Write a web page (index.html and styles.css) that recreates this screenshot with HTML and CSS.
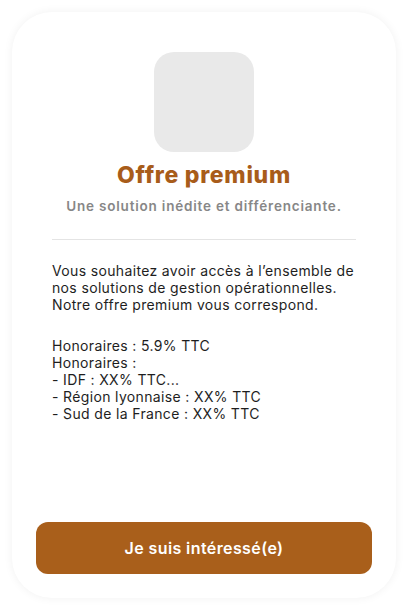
FILE: index.html
```html
<!DOCTYPE html>
<html lang="fr">
<head>
  <meta charset="UTF-8">
  <title>Offre premium</title>
  <link rel="stylesheet" href="styles.css">
</head>
<body>

  <div class="carte">
    <div class="contenu">
      <div class="vignette"></div>
      <h1 class="titre">Offre premium</h1>
      <p class="sous-titre">Une solution inédite et différenciante.</p>
      <hr class="separateur">
      <p class="texte">Vous souhaitez avoir accès à l’ensemble de<br>
        nos solutions de gestion opérationnelles.<br>
        Notre offre premium vous correspond.</p>
      <p class="texte">Honoraires : 5.9% TTC<br>
        Honoraires :<br>
        - IDF : XX% TTC...<br>
        - Région lyonnaise : XX% TTC<br>
        - Sud de la France : XX% TTC</p>
    </div>
    <button class="bouton">Je suis intéressé(e)</button>
  </div>

</body>
</html>
```

FILE: styles.css
```css
body {
  margin: 0;
  background: #fff;
  font-family: Inter, "Noto Sans", sans-serif;
}

.carte {
  margin: 12px;
  height: 586px;
  box-sizing: border-box;
  border-radius: 40px;
  background: #fff;
  box-shadow: 0 0 10px rgba(0, 0, 0, 0.06);
  padding: 40px 24px 24px;
  display: flex;
  flex-direction: column;
}

.contenu {
  padding: 0 16px;
  display: flex;
  flex-direction: column;
  align-items: center;
}

.vignette {
  width: 100px;
  height: 100px;
  border-radius: 20px;
  background-color: #e9e9e9;
}

.titre {
  margin: 9px 0 0;
  font-size: 23px;
  line-height: 28px;
  font-weight: 800;
  color: #a85c1a;
  letter-spacing: 0.7px;
}

.sous-titre {
  margin: 8px 0 0;
  font-size: 13.5px;
  line-height: 18px;
  font-weight: 600;
  color: #878787;
  letter-spacing: 0.8px;
}

.separateur {
  align-self: stretch;
  border: 0;
  border-top: 1px solid #e4e4e4;
  margin: 24px 0 0;
}

.texte {
  align-self: stretch;
  margin: 22px 0 0;
  font-size: 14px;
  line-height: 17px;
  color: #1e1e1e;
  letter-spacing: 0.35px;
  white-space: nowrap;
}

.texte + .texte {
  margin-top: 24px;
}

.bouton {
  margin-top: auto;
  height: 52px;
  border: 0;
  border-radius: 12px;
  background-color: #a95f1b;
  color: #fff;
  font-family: inherit;
  font-size: 16px;
  font-weight: 600;
  letter-spacing: 0.4px;
}
```
